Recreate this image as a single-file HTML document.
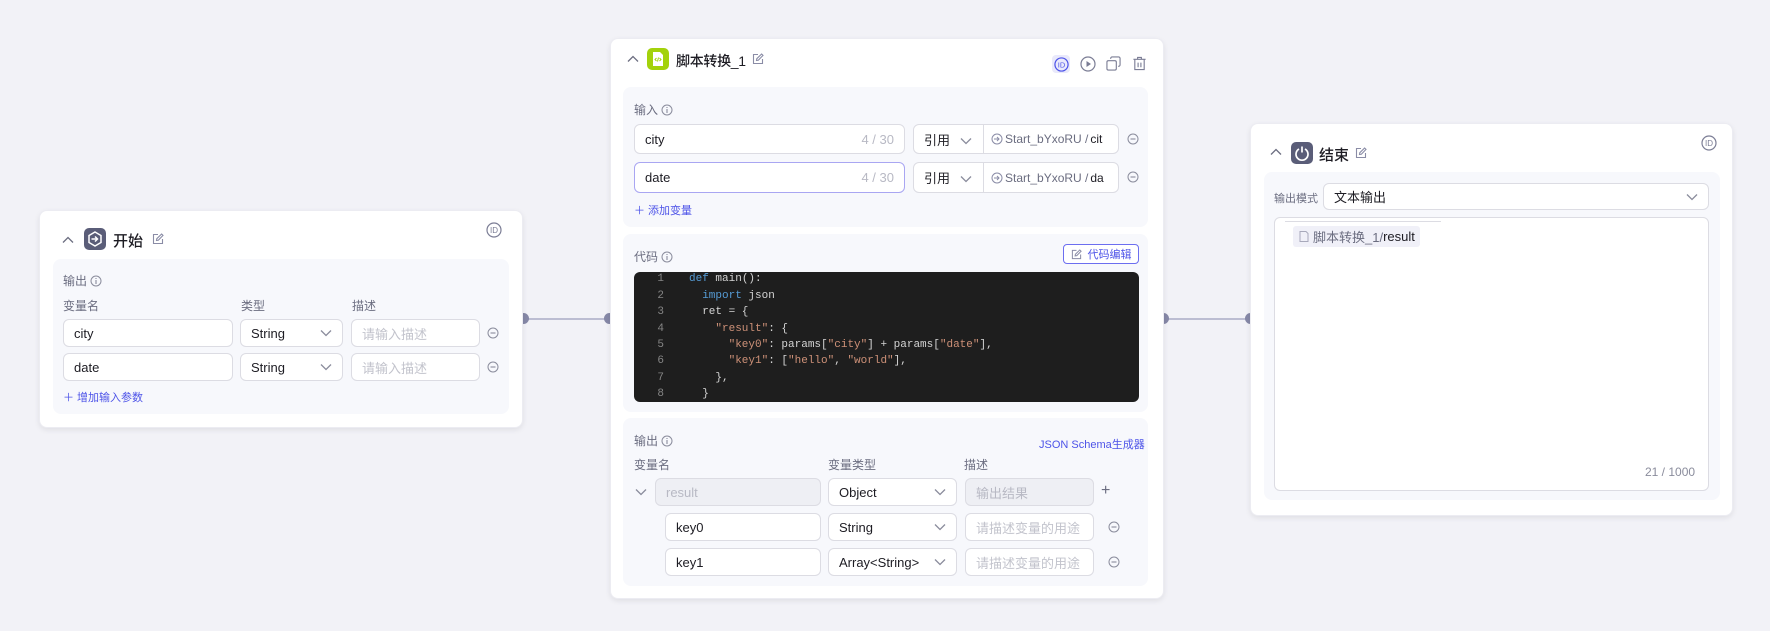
<!DOCTYPE html>
<html><head><meta charset="utf-8"><style>
*{box-sizing:border-box;margin:0;padding:0}
body{width:1770px;height:631px;background:#f2f2f7;font-family:"Liberation Sans","Noto Sans CJK SC",sans-serif;position:relative;overflow:hidden;color:#1d1c23}
.a{position:absolute}
.card{position:absolute;background:#fff;border-radius:8px;box-shadow:0 2px 6px rgba(0,0,0,.08);border:1px solid #ececf2}
.sec{position:absolute;background:#f7f8fc;border-radius:8px}
.lbl{position:absolute;font-size:12px;color:#6b6d80;display:flex;align-items:center;gap:3px}
.inp{position:absolute;background:#fff;border:1px solid #dcdce3;border-radius:6px;font-size:13px;display:flex;align-items:center;padding-left:10px;color:#1d1c23}
.ph{color:#c2c3cc}
.dis{background:#eeeff4;color:#b8b9c4}
.chev{position:absolute;right:10px;top:50%;margin-top:-4px}
.title{position:absolute;font-size:14px;font-weight:500;color:#1d1c23;white-space:nowrap}
.code{position:absolute;background:#1e1e1e;border-radius:6px;font-family:"Liberation Mono",monospace;font-size:11px;color:#d4d4d4;overflow:hidden}
.ln{position:absolute;width:20px;text-align:right;color:#858585;left:10px}
.cl{position:absolute;left:55px;white-space:pre}
.k{color:#569cd6}.s{color:#ce9178}
.dot{position:absolute;width:11px;height:11px;border-radius:50%;background:#8688a7}
.line{position:absolute;height:2px;background:#bcbdd2}
</style></head><body>
<svg width="0" height="0" style="position:absolute"><defs>
<symbol id="chv" viewBox="0 0 12 8"><path d="M1 1.5l5 5 5-5" fill="none" stroke="#8a8c9c" stroke-width="1.3"/></symbol>
<symbol id="up" viewBox="0 0 12 8"><path d="M1 6.5l5-5 5 5" fill="none" stroke="#6b6d80" stroke-width="1.3"/></symbol>
<symbol id="edit" viewBox="0 0 12 12"><path d="M6 1.5H1.5v9h9V6" fill="none" stroke="#8a8ca6" stroke-width="1.1"/><path d="M4.5 7.5l.3-1.8L9.6 1l1.4 1.4L6.3 7.2z" fill="none" stroke="#8a8ca6" stroke-width="1.1"/></symbol>
<symbol id="info" viewBox="0 0 12 12"><circle cx="6" cy="6" r="5" fill="none" stroke="#8a8c9c" stroke-width="1"/><path d="M6 5v4M6 3v1" stroke="#8a8c9c" stroke-width="1.1"/></symbol>
<symbol id="minus" viewBox="0 0 12 12"><circle cx="6" cy="6" r="5" fill="none" stroke="#8a8c9c" stroke-width="1"/><path d="M3.5 6h5" stroke="#8a8c9c" stroke-width="1.1"/></symbol>
<symbol id="id" viewBox="0 0 16 16"><circle cx="8" cy="8" r="7" fill="none" stroke="#7b7d95" stroke-width="1.2"/><text x="8" y="11" font-size="8" text-anchor="middle" fill="#7b7d95" font-family="Liberation Sans">ID</text></symbol>
<symbol id="ref" viewBox="0 0 12 12"><circle cx="6" cy="6" r="5" fill="none" stroke="#8a8ca6" stroke-width="1"/><path d="M3 6h5M6 4l2 2-2 2" fill="none" stroke="#8a8ca6" stroke-width="1"/></symbol>
</defs></svg>

<div class="line" style="left:523px;top:318px;width:87px"></div>
<div class="dot" style="left:518px;top:313px"></div>
<div class="dot" style="left:604px;top:313px"></div>
<div class="line" style="left:1163px;top:318px;width:87px"></div>
<div class="dot" style="left:1158px;top:313px"></div>
<div class="dot" style="left:1245px;top:313px"></div>

<!-- LEFT CARD -->
<div class="card" style="left:39px;top:210px;width:484px;height:218px"></div>
<svg class="a" style="left:62px;top:236px" width="12" height="8"><use href="#up"/></svg>
<div class="a" style="left:84px;top:228px;width:22px;height:22px;background:#5a5d78;border-radius:5px"><svg width="22" height="22" viewBox="0 0 22 22"><path d="M11 4l6 3.5v7L11 18l-6-3.5v-7z" fill="none" stroke="#fff" stroke-width="1.5"/><path d="M7.5 11h6M11 8.5l2.5 2.5-2.5 2.5" fill="none" stroke="#fff" stroke-width="1.5"/></svg></div>
<div class="title" style="left:113px;top:230px;font-size:15px">开始</div>
<svg class="a" style="left:152px;top:233px" width="12" height="12"><use href="#edit"/></svg>
<svg class="a" style="left:486px;top:222px" width="16" height="16"><use href="#id"/></svg>
<div class="sec" style="left:53px;top:259px;width:456px;height:155px"></div>
<div class="lbl" style="left:63px;top:272px">输出<svg width="12" height="12"><use href="#info"/></svg></div>
<div class="lbl" style="left:63px;top:297px">变量名</div>
<div class="lbl" style="left:241px;top:297px">类型</div>
<div class="lbl" style="left:352px;top:297px">描述</div>
<div class="inp" style="left:63px;top:319px;width:170px;height:28px">city</div>
<div class="inp" style="left:240px;top:319px;width:103px;height:28px">String<svg class="chev" width="12" height="8"><use href="#chv"/></svg></div>
<div class="inp" style="left:351px;top:319px;width:129px;height:28px"><span class="ph">请输入描述</span></div>
<svg class="a" style="left:487px;top:327px" width="12" height="12"><use href="#minus"/></svg>
<div class="inp" style="left:63px;top:353px;width:170px;height:28px">date</div>
<div class="inp" style="left:240px;top:353px;width:103px;height:28px">String<svg class="chev" width="12" height="8"><use href="#chv"/></svg></div>
<div class="inp" style="left:351px;top:353px;width:129px;height:28px"><span class="ph">请输入描述</span></div>
<svg class="a" style="left:487px;top:361px" width="12" height="12"><use href="#minus"/></svg>
<div class="lbl" style="left:63px;top:389px;font-size:11px;color:#4d53e8">＋ 增加输入参数</div>

<!-- MIDDLE CARD -->
<div class="card" style="left:610px;top:38px;width:554px;height:561px"></div>
<svg class="a" style="left:627px;top:55px" width="12" height="8"><use href="#up"/></svg>
<div class="a" style="left:647px;top:48px;width:22px;height:22px;background:#a3d20b;border-radius:5px"><svg width="22" height="22" viewBox="0 0 22 22"><path d="M6 4h7l3 3v11H6z" fill="#fff"/><path d="M9.5 10l-1.5 1.5 1.5 1.5M12.5 10l1.5 1.5-1.5 1.5M11.5 9.5l-1 4" fill="none" stroke="#a3d20b" stroke-width="1"/></svg></div>
<div class="title" style="left:676px;top:51px;letter-spacing:-0.3px">脚本转换_1</div>
<svg class="a" style="left:752px;top:53px" width="12" height="12"><use href="#edit"/></svg>
<div class="a" style="left:1052px;top:55px;width:18px;height:18px;background:#e9e9fb;border-radius:4px"></div>
<svg class="a" style="left:1054px;top:57px" width="15" height="15" viewBox="0 0 16 16"><circle cx="8" cy="8" r="7" fill="none" stroke="#4d53e8" stroke-width="1.3"/><text x="8" y="11" font-size="8" text-anchor="middle" fill="#4d53e8" font-family="Liberation Sans">ID</text></svg>
<svg class="a" style="left:1080px;top:56px" width="16" height="16" viewBox="0 0 16 16"><circle cx="8" cy="8" r="7" fill="none" stroke="#7b7d95" stroke-width="1.2"/><path d="M6.5 5v6l4.5-3z" fill="#7b7d95"/></svg>
<svg class="a" style="left:1106px;top:56px" width="15" height="15" viewBox="0 0 16 16"><rect x="1" y="5" width="10" height="10" rx="1.5" fill="none" stroke="#7b7d95" stroke-width="1.2"/><path d="M5 3V2.5C5 1.7 5.7 1 6.5 1h7c.8 0 1.5.7 1.5 1.5v7c0 .8-.7 1.5-1.5 1.5H13" fill="none" stroke="#7b7d95" stroke-width="1.2"/></svg>
<svg class="a" style="left:1132px;top:56px" width="15" height="15" viewBox="0 0 16 16"><path d="M1.5 3.5h13M6 3.5V1.5h4v2M3 3.5v11h10v-11M6.5 7v5M9.5 7v5" fill="none" stroke="#7b7d95" stroke-width="1.2"/></svg>

<div class="sec" style="left:623px;top:87px;width:525px;height:140px"></div>
<div class="lbl" style="left:634px;top:101px">输入<svg width="12" height="12"><use href="#info"/></svg></div>
<div class="inp" style="left:634px;top:124px;width:271px;height:30px">city<span class="a" style="right:10px;color:#b8b9c4">4 / 30</span></div>
<div class="inp" style="left:634px;top:162px;width:271px;height:31px;border-color:#a9a6f2">date<span class="a" style="right:10px;color:#b8b9c4">4 / 30</span></div>
<div class="inp" style="left:913px;top:124px;width:206px;height:30px">引用<svg class="a" style="left:46px;top:12px" width="12" height="8"><use href="#chv"/></svg><span class="a" style="left:69px;top:0;bottom:0;width:1px;background:#dcdce3"></span><span class="a" style="left:77px;font-size:12px;color:#6b6d80;display:flex;align-items:center;gap:2px;white-space:nowrap"><svg width="12" height="12"><use href="#ref"/></svg>Start_bYxoRU / <span style="color:#1d1c23">cit</span></span></div>
<div class="inp" style="left:913px;top:162px;width:206px;height:31px">引用<svg class="a" style="left:46px;top:12px" width="12" height="8"><use href="#chv"/></svg><span class="a" style="left:69px;top:0;bottom:0;width:1px;background:#dcdce3"></span><span class="a" style="left:77px;font-size:12px;color:#6b6d80;display:flex;align-items:center;gap:2px;white-space:nowrap"><svg width="12" height="12"><use href="#ref"/></svg>Start_bYxoRU / <span style="color:#1d1c23">da</span></span></div>
<svg class="a" style="left:1127px;top:133px" width="12" height="12"><use href="#minus"/></svg>
<svg class="a" style="left:1127px;top:171px" width="12" height="12"><use href="#minus"/></svg>
<div class="lbl" style="left:634px;top:202px;font-size:11px;color:#4d53e8">＋ 添加变量</div>

<div class="sec" style="left:623px;top:234px;width:525px;height:178px"></div>
<div class="lbl" style="left:634px;top:248px">代码<svg width="12" height="12"><use href="#info"/></svg></div>
<div class="a" style="left:1063px;top:244px;width:76px;height:20px;border:1px solid #6c6ef0;border-radius:4px;background:#fff;font-size:11px;color:#4d53e8;display:flex;align-items:center;justify-content:center;gap:6px"><svg width="11" height="11"><use href="#edit"/></svg>代码编辑</div>
<div class="code" style="left:634px;top:272px;width:505px;height:130px">
<div class="ln" style="top:1px">1</div><div class="cl" style="top:1px"><span class="k">def</span> main():</div>
<div class="ln" style="top:18px">2</div><div class="cl" style="top:18px">  <span class="k">import</span> json</div>
<div class="ln" style="top:34px">3</div><div class="cl" style="top:34px">  ret = {</div>
<div class="ln" style="top:51px">4</div><div class="cl" style="top:51px">    <span class="s">"result"</span>: {</div>
<div class="ln" style="top:67px">5</div><div class="cl" style="top:67px">      <span class="s">"key0"</span>: params[<span class="s">"city"</span>] + params[<span class="s">"date"</span>],</div>
<div class="ln" style="top:83px">6</div><div class="cl" style="top:83px">      <span class="s">"key1"</span>: [<span class="s">"hello"</span>, <span class="s">"world"</span>],</div>
<div class="ln" style="top:100px">7</div><div class="cl" style="top:100px">    },</div>
<div class="ln" style="top:116px">8</div><div class="cl" style="top:116px">  }</div>
</div>

<div class="sec" style="left:623px;top:418px;width:525px;height:168px"></div>
<div class="lbl" style="left:634px;top:432px">输出<svg width="12" height="12"><use href="#info"/></svg></div>
<div class="a" style="left:1039px;top:436px;font-size:11px;color:#4d53e8">JSON Schema生成器</div>
<div class="lbl" style="left:634px;top:456px">变量名</div>
<div class="lbl" style="left:828px;top:456px">变量类型</div>
<div class="lbl" style="left:964px;top:456px">描述</div>
<svg class="a" style="left:635px;top:488px" width="12" height="8"><use href="#chv"/></svg>
<div class="inp dis" style="left:655px;top:478px;width:166px;height:28px">result</div>
<div class="inp" style="left:828px;top:478px;width:129px;height:28px">Object<svg class="chev" width="12" height="8"><use href="#chv"/></svg></div>
<div class="inp dis" style="left:965px;top:478px;width:129px;height:28px">输出结果</div>
<div class="a" style="left:1101px;top:482px;font-size:16px;color:#6b6d80">+</div>
<div class="inp" style="left:665px;top:513px;width:156px;height:28px">key0</div>
<div class="inp" style="left:828px;top:513px;width:129px;height:28px">String<svg class="chev" width="12" height="8"><use href="#chv"/></svg></div>
<div class="inp" style="left:965px;top:513px;width:129px;height:28px"><span class="ph">请描述变量的用途</span></div>
<svg class="a" style="left:1108px;top:521px" width="12" height="12"><use href="#minus"/></svg>
<div class="inp" style="left:665px;top:548px;width:156px;height:28px">key1</div>
<div class="inp" style="left:828px;top:548px;width:129px;height:28px">Array&lt;String&gt;<svg class="chev" width="12" height="8"><use href="#chv"/></svg></div>
<div class="inp" style="left:965px;top:548px;width:129px;height:28px"><span class="ph">请描述变量的用途</span></div>
<svg class="a" style="left:1108px;top:556px" width="12" height="12"><use href="#minus"/></svg>

<!-- RIGHT CARD -->
<div class="card" style="left:1250px;top:123px;width:483px;height:393px"></div>
<svg class="a" style="left:1270px;top:148px" width="12" height="8"><use href="#up"/></svg>
<div class="a" style="left:1291px;top:142px;width:22px;height:22px;background:#5a5d78;border-radius:5px"><svg width="22" height="22" viewBox="0 0 22 22"><path d="M8 7a6 6 0 1 0 6 0" fill="none" stroke="#fff" stroke-width="1.7"/><path d="M11 4.5v6" stroke="#fff" stroke-width="1.7"/></svg></div>
<div class="title" style="left:1319px;top:144px;font-size:15px">结束</div>
<svg class="a" style="left:1355px;top:147px" width="12" height="12"><use href="#edit"/></svg>
<svg class="a" style="left:1701px;top:135px" width="16" height="16"><use href="#id"/></svg>
<div class="sec" style="left:1264px;top:172px;width:456px;height:328px"></div>
<div class="lbl" style="left:1274px;top:190px;font-size:11px">输出模式</div>
<div class="inp" style="left:1323px;top:183px;width:386px;height:27px">文本输出<svg class="chev" width="12" height="8"><use href="#chv"/></svg></div>
<div class="a" style="left:1274px;top:217px;width:435px;height:274px;background:#fff;border:1px solid #dcdce3;border-radius:6px"></div>
<div class="a" style="left:1285px;top:221px;width:156px;height:1px;background:#dcdce3"></div>
<div class="a" style="left:1293px;top:226px;width:127px;height:21px;background:#f0f0f8;border-radius:3px;font-size:13px;color:#6b6d80;display:flex;align-items:center;padding-left:6px;white-space:nowrap"><svg width="10" height="11" viewBox="0 0 10 11" style="margin-right:4px"><path d="M1 .5h6l2 2v8H1z" fill="none" stroke="#a8a9bb"/></svg>脚本转换_1/<span style="color:#1d1c23">result</span></div>
<div class="a" style="left:1645px;top:465px;font-size:12px;color:#8a8c9c">21 / 1000</div>
</body></html>
